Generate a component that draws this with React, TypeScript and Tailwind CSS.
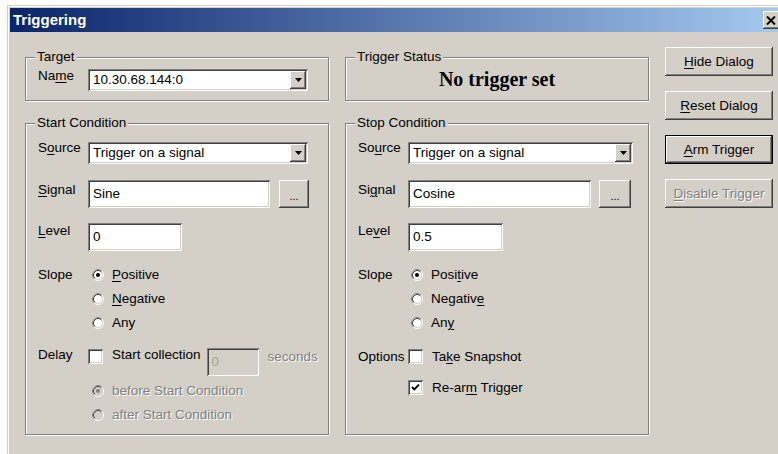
import type { ReactNode } from 'react';

// classic 3D edges
const raised =
  'shadow-[inset_-1px_-1px_#404040,inset_1px_1px_#fff,inset_-2px_-2px_#808080,inset_2px_2px_#d4d0c8]';
const sunken =
  'shadow-[inset_1px_1px_#808080,inset_-1px_-1px_#fff,inset_2px_2px_#404040,inset_-2px_-2px_#d4d0c8]';
const grayed = 'text-[#808080] [text-shadow:1px_1px_0_#fff]';

function U({ children }: { children: ReactNode }) {
  return <span className="underline decoration-1 underline-offset-[2px]">{children}</span>;
}

function Group({
  title,
  className = '',
  children,
}: {
  title: string;
  className?: string;
  children: ReactNode;
}) {
  return (
    <fieldset
      className={`border border-[#808080] pl-[12px] shadow-[inset_1px_1px_#fff,1px_1px_#fff] ${className}`}
    >
      <legend className="-ml-[3px] bg-[#d4d0c8] px-[2px] leading-[16px]">{title}</legend>
      {children}
    </fieldset>
  );
}

function Radio({ checked, disabled }: { checked?: boolean; disabled?: boolean }) {
  return (
    <svg width="12" height="12" viewBox="0 0 12 12" className="shrink-0">
      <circle cx="6" cy="6" r="5.5" fill="none" stroke="#fff" />
      <path d="M2.11 9.89A5.5 5.5 0 0 1 9.89 2.11" fill="none" stroke="#808080" />
      <circle cx="6" cy="6" r="4.5" fill={disabled ? '#d4d0c8' : '#fff'} stroke="#d4d0c8" />
      <path d="M2.82 9.18A4.5 4.5 0 0 1 9.18 2.82" fill="none" stroke="#404040" />
      {checked && <circle cx="6" cy="6" r="2" fill={disabled ? '#808080' : '#000'} />}
    </svg>
  );
}

function Check({ checked }: { checked?: boolean }) {
  return (
    <span className={`flex h-[15px] w-[15px] shrink-0 items-center justify-center bg-white ${sunken}`}>
      {checked && (
        <svg width="9" height="9" viewBox="0 0 9 9">
          <path d="M1 4l2.3 2.4L8 1.6" fill="none" stroke="#000" strokeWidth="2" />
        </svg>
      )}
    </span>
  );
}

function Combo({ value, className = '' }: { value: string; className?: string }) {
  return (
    <div className={`flex h-[22px] items-center bg-white p-[2px] ${sunken} ${className}`}>
      <span className="flex-1 pl-[3px]">{value}</span>
      <span className={`flex h-full w-[16px] items-center justify-center bg-[#d4d0c8] ${raised}`}>
        <svg width="7" height="4" viewBox="0 0 7 4">
          <path d="M0 0h7L3.5 4z" fill="#000" />
        </svg>
      </span>
    </div>
  );
}

function Edit({
  value,
  className = '',
  disabled,
}: {
  value: string;
  className?: string;
  disabled?: boolean;
}) {
  return (
    <div
      className={`flex h-[28px] shrink-0 items-center pl-[5px] ${sunken} ${
        disabled ? 'bg-[#d4d0c8] text-[#a0a0a0]' : 'bg-white'
      } ${className}`}
    >
      {value}
    </div>
  );
}

function Browse({ className = '' }: { className?: string }) {
  return (
    <div
      className={`flex h-[28px] items-center justify-center bg-[#d4d0c8] pt-[4px] text-[11px] ${raised} ${className}`}
    >
      ...
    </div>
  );
}

function Button({
  children,
  primary,
  disabled,
}: {
  children: ReactNode;
  primary?: boolean;
  disabled?: boolean;
}) {
  const frame = primary
    ? 'shadow-[inset_0_0_0_1px_#000,inset_-2px_-2px_#404040,inset_2px_2px_#fff,inset_-3px_-3px_#808080]'
    : raised;
  return (
    <div
      className={`flex h-[29px] w-[108px] items-center justify-center bg-[#d4d0c8] ${frame} ${
        disabled ? grayed : ''
      }`}
    >
      {children}
    </div>
  );
}

function Field({
  label,
  labelClass = '',
  className = '',
  children,
}: {
  label: ReactNode;
  labelClass?: string;
  className?: string;
  children: ReactNode;
}) {
  return (
    <div className={`flex items-start ${className}`}>
      <span className={`w-[50px] shrink-0 ${labelClass}`}>{label}</span>
      {children}
    </div>
  );
}

function Choice({
  label,
  checked,
  disabled,
  offset = 'ml-[4px]',
  children,
}: {
  label?: ReactNode;
  checked?: boolean;
  disabled?: boolean;
  offset?: string;
  children: ReactNode;
}) {
  return (
    <div className="flex h-[24px] items-center">
      <span className="w-[50px] shrink-0">{label}</span>
      <span className={offset}>
        <Radio checked={checked} disabled={disabled} />
      </span>
      <span className={`ml-[8px] ${disabled ? grayed : ''}`}>{children}</span>
    </div>
  );
}

export default function App() {
  return (
    <div className="h-[454px] w-[778px] overflow-hidden bg-white pl-[7px] pt-[5px] font-['Liberation_Sans',Arial,sans-serif] text-[13.5px] leading-[16px] text-black">
      <div className="h-[460px] w-[781px] bg-[#d4d0c8] p-[3px] shadow-[inset_1px_1px_#d4d0c8,inset_2px_2px_#fff]">
        <div className="flex h-[24px] items-center bg-[linear-gradient(to_right,#0a246a,#a6caf0)] pl-[3px] pr-[2px]">
          <span className="text-[15px] font-bold text-white">Triggering</span>
          <span className={`ml-auto flex h-[18px] w-[20px] items-center pl-[3px] bg-[#d4d0c8] ${raised}`}>
            <svg width="10" height="9" viewBox="0 0 10 9">
              <path d="M1 0.5l8 8M9 0.5l-8 8" stroke="#000" strokeWidth="2" />
            </svg>
          </span>
        </div>

        <div className="flex items-start pl-[15px] pt-[15px]">
          {/* target + start condition */}
          <div className="flex w-[304px] flex-col pt-[2px]">
            <Group title="Target" className="h-[52px] pt-[4px]">
              <Field label={<>Na<U>m</U>e</>} labelClass="-mt-[1px]">
                <Combo value="10.30.68.144:0" className="w-[220px]" />
              </Field>
            </Group>

            <Group title="Start Condition" className="mt-[14px] h-[320px] pt-[11px]">
              <Field label={<>S<U>o</U>urce</>} labelClass="-mt-[2px]">
                <Combo value="Trigger on a signal" className="w-[220px]" />
              </Field>
              <Field label={<><U>S</U>ignal</>} labelClass="mt-[2px]" className="mt-[16px]">
                <Edit value="Sine" className="w-[182px]" />
                <Browse className="ml-[9px] w-[30px]" />
              </Field>
              <Field label={<><U>L</U>evel</>} className="mt-[15px]">
                <Edit value="0" className="w-[94px]" />
              </Field>

              <div className="mt-[12px]">
                <Choice label="Slope" checked>
                  <U>P</U>ositive
                </Choice>
                <Choice>
                  <U>N</U>egative
                </Choice>
                <Choice>Any</Choice>
              </div>

              <div className="mt-[13px] flex h-[28px] items-start">
                <span className="-mt-[1px] w-[50px] shrink-0">Delay</span>
                <span className="mt-[1px]">
                  <Check />
                </span>
                <span className="-mt-[1px] ml-[9px]">Start collection</span>
                <Edit value="0" disabled className="ml-[6px] w-[52px]" />
                <span className={`ml-[9px] mt-[1px] ${grayed}`}>seconds</span>
              </div>

              <div className="mt-[3px]">
                <Choice checked disabled>
                  before Start Condition
                </Choice>
                <Choice disabled>after Start Condition</Choice>
              </div>
            </Group>
          </div>

          {/* status + stop condition */}
          <div className="ml-[16px] flex w-[304px] flex-col pt-[2px]">
            <Group title="Trigger Status" className="h-[52px] pt-[3px]">
              <div className="-ml-[12px] text-center font-['Liberation_Serif',serif] text-[20px] font-bold leading-[22px]">
                No trigger set
              </div>
            </Group>

            <Group title="Stop Condition" className="mt-[14px] h-[320px] pt-[11px]">
              <Field label={<>So<U>u</U>rce</>} labelClass="-mt-[2px]">
                <Combo value="Trigger on a signal" className="w-[225px]" />
              </Field>
              <Field label={<>Si<U>g</U>nal</>} labelClass="mt-[2px]" className="mt-[16px]">
                <Edit value="Cosine" className="w-[183px]" />
                <Browse className="ml-[8px] w-[32px]" />
              </Field>
              <Field label={<>Le<U>v</U>el</>} className="mt-[15px]">
                <Edit value="0.5" className="w-[95px]" />
              </Field>

              <div className="mt-[12px]">
                <Choice label="Slope" checked offset="ml-[3px]">
                  Posi<U>t</U>ive
                </Choice>
                <Choice offset="ml-[3px]">
                  Negativ<U>e</U>
                </Choice>
                <Choice offset="ml-[3px]">
                  An<U>y</U>
                </Choice>
              </div>

              <div className="mt-[13px] flex h-[17px] items-center">
                <span className="w-[50px] shrink-0">Options</span>
                <Check />
                <span className="ml-[9px]">
                  Ta<U>k</U>e Snapshot
                </span>
              </div>
              <div className="mt-[14px] flex h-[17px] items-center pl-[50px]">
                <Check checked />
                <span className="ml-[9px]">
                  Re-ar<U>m</U> Trigger
                </span>
              </div>
            </Group>
          </div>

          {/* command buttons */}
          <div className="ml-[16px] flex flex-col gap-[15px]">
            <Button>
              <U>H</U>ide Dialog
            </Button>
            <Button>
              <U>R</U>eset Dialog
            </Button>
            <Button primary>
              <U>A</U>rm Trigger
            </Button>
            <Button disabled>
              <U>D</U>isable Trigger
            </Button>
          </div>
        </div>
      </div>
    </div>
  );
}
